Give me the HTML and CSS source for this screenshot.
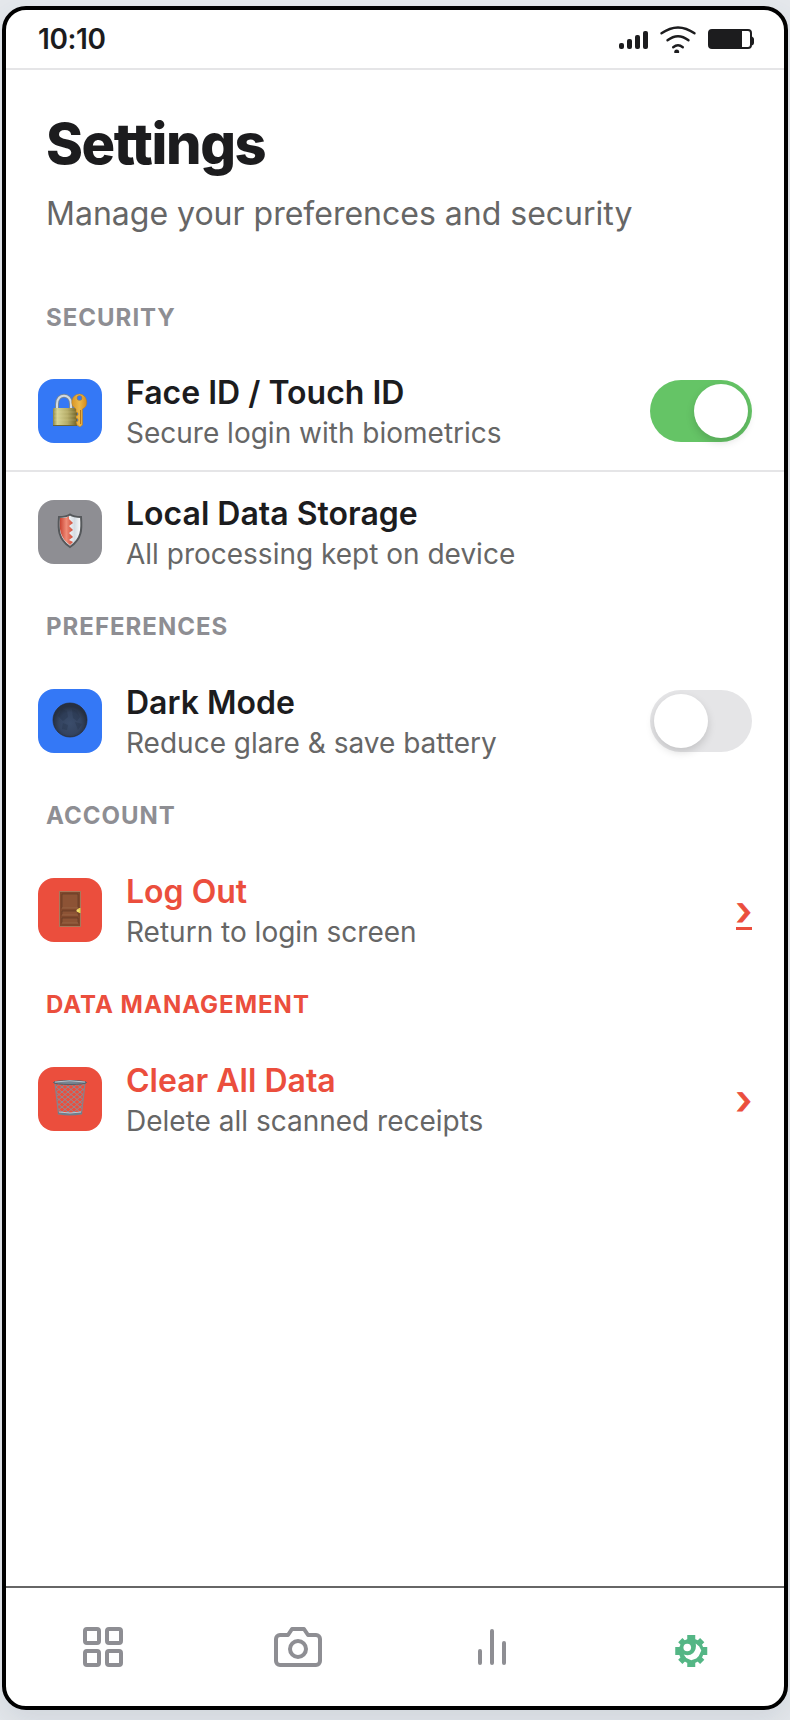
FILE: index.html
```html
<!DOCTYPE html>
<html lang="en">
<head>
<meta charset="utf-8">
<title>Settings</title>
<link rel="stylesheet" href="styles.css">
</head>
<body>
<div class="phone">
  <div class="status">
    <span class="time">10:10</span>
    <svg class="status-icons" width="138" height="36" viewBox="618 20 138 36">
      <g fill="#1c1c1e">
        <rect x="619" y="43" width="5" height="6" rx="2"/>
        <rect x="627" y="39" width="5" height="10" rx="2"/>
        <rect x="635" y="35" width="5" height="14" rx="2"/>
        <rect x="643" y="31" width="5" height="18" rx="2"/>
        <path d="M674.3 53v-1.400a2.400 2.200 0 0 1 4.800 0V53z"/>
        <rect x="709" y="30" width="33" height="18"/>
        <path d="M752 36.500q2 1 2 2.500v4q0 1.500-2 2.500z"/>
      </g>
      <g fill="none" stroke="#1c1c1e" stroke-width="2.400" stroke-linecap="round">
        <path d="M661.500 33.300Q678 21.700 694.500 33.300M667.500 40.300q10.500-8.300 21 0M673.200 47.200q4.800-3.800 9.600 0"/>
        <rect x="709" y="30" width="42" height="18" rx="3" stroke-width="2"/>
      </g>
    </svg>
  </div>
  <main class="content">
    <h1>Settings</h1>
    <p class="lead">Manage your preferences and security</p>

    <h2>SECURITY</h2>
    <div class="row divided">
      <span class="tile blue">
        <svg width="64" height="64">
          <defs>
            <linearGradient id="brass" x2="1"><stop offset="0" stop-color="#8d8545"/><stop offset=".18" stop-color="#d6d393"/><stop offset=".6" stop-color="#b5ac68"/><stop offset="1" stop-color="#716328"/></linearGradient>
            <linearGradient id="gold" x2="1"><stop offset="0" stop-color="#d99525"/><stop offset=".5" stop-color="#edb94a"/><stop offset="1" stop-color="#d58c1b"/></linearGradient>
          </defs>
          <path d="M19 31v-6c0-11 14-11 14 0v6" fill="none" stroke="#778798" stroke-width="4"/>
          <path d="M19 31v-6c0-11 14-11 14 0v6" fill="none" stroke="#d3dbe2" stroke-width="2"/>
          <rect x="15" y="29" width="24" height="18" rx="1" fill="url(#brass)"/>
          <path d="M16 33h22M16 37h22M16 41h22" stroke="#eeeab0" stroke-opacity=".2"/>
          <path d="M15 46.500h24" stroke="#6d6432"/>
          <path fill="url(#gold)" stroke="#b97a1b" stroke-width=".5" fill-rule="evenodd" d="M41.500 15a8 8 0 0 0-3.500 15v3l2 1v2l-2 1v2l2 1v2l-2 1 1 3 3 2 2.500-2V30a8 8 0 0 0-3-15zm0 1.500a2.500 2.500 0 1 1 0 5 2.500 2.500 0 0 1 0-5z"/>
          <path d="M42.500 31v14" stroke="#b6761b"/>
        </svg>
      </span>
      <div class="text"><b>Face ID / Touch ID</b><span>Secure login with biometrics</span></div>
      <span class="toggle on"></span>
    </div>
    <div class="row">
      <span class="tile gray">
        <svg width="64" height="64">
          <defs>
            <linearGradient id="red" x2="1"><stop offset="0" stop-color="#c8402f"/><stop offset=".5" stop-color="#ef8c78"/><stop offset="1" stop-color="#cf4b38"/></linearGradient>
            <linearGradient id="silver" x2="1"><stop offset=".4" stop-color="#f6f8fa"/><stop offset=".7" stop-color="#d5dce3"/><stop offset="1" stop-color="#fff"/></linearGradient>
          </defs>
          <path d="M32 14.500c3 2 7 2.500 11 2.500 1 12 1 22-11 30-12-8-12-18-11-30 4 0 8-.500 11-2.500z" fill="url(#silver)"/>
          <path d="M31 16v3l4 4-4 3 4 4-4 3 4 4-4 3 4 2-3 3c-10-7-11-16-10-27 4 0 6 0 9-2z" fill="url(#red)"/>
          <path d="M32 14.500c3 2 7 2.500 11 2.500 1 12 1 22-11 30-12-8-12-18-11-30 4 0 8-.500 11-2.500z" fill="none" stroke="#55585b" stroke-width="2"/>
        </svg>
      </span>
      <div class="text"><b>Local Data Storage</b><span>All processing kept on device</span></div>
    </div>

    <h2>PREFERENCES</h2>
    <div class="row">
      <span class="tile blue">
        <svg width="64" height="64">
          <defs><radialGradient id="moon" cx=".5" cy=".6"><stop offset="0" stop-color="#3b4d6b"/><stop offset=".65" stop-color="#344460"/><stop offset="1" stop-color="#263042"/></radialGradient></defs>
          <circle cx="32" cy="31" r="17" fill="url(#moon)" stroke="#28292d" stroke-width=".7"/>
          <path d="M20 27l4-7 5 2 1 6-5 4zM34 20l5 2 3 6-3 4-4-3zM25 34l5 2-1 5-5-1zM37 33l7 2-4 6z" fill="#1b263a" opacity=".25"/>
        </svg>
      </span>
      <div class="text"><b>Dark Mode</b><span>Reduce glare &amp; save battery</span></div>
      <span class="toggle"></span>
    </div>

    <h2>ACCOUNT</h2>
    <div class="row">
      <span class="tile red">
        <svg width="64" height="64">
          <rect x="21.500" y="13.500" width="21" height="35" fill="#80482c" stroke="#a8785b"/>
          <path d="M24 16h16v14H24zM24 33h16v4H24zM24 40h16v5H24z" fill="#8d5335" stroke="#51301f" stroke-opacity=".5"/>
          <path d="M24 30h16M24 37h16M24 45h16" stroke="#a86d4a"/>
          <path d="M39.500 32h1v-2h2v5h-2v-1h-1z" fill="#eacb4b"/><circle cx="40" cy="32.500" r="1.500" fill="#f3e16c"/>
        </svg>
      </span>
      <div class="text"><b class="danger">Log Out</b><span>Return to login screen</span></div>
      <a class="chevron linked">›</a>
    </div>

    <h2 class="danger">DATA MANAGEMENT</h2>
    <div class="row">
      <span class="tile red">
        <svg width="64" height="64">
          <defs><pattern id="mesh" width="6" height="5" patternUnits="userSpaceOnUse"><path d="M0 0l6 5M6 0L0 5" stroke="#8e8b94" stroke-width="1"/></pattern></defs>
          <path d="M17 16h30l-3.500 31h-23z" fill="url(#mesh)" stroke="#85838c" stroke-width="1.200"/>
          <path d="M20 45q12 2.500 24 0v2q-12 3-24 0z" fill="#6e7e8c"/><path d="M21 45q11 2 22 0" stroke="#bac9d3" fill="none"/>
          <ellipse cx="32" cy="15.500" rx="16.500" ry="2" fill="#77848f" stroke="#555e68"/>
          <path d="M17 15q15-2.500 30 0" stroke="#b7c4ce" fill="none"/>
        </svg>
      </span>
      <div class="text"><b class="danger">Clear All Data</b><span>Delete all scanned receipts</span></div>
      <a class="chevron">›</a>
    </div>
  </main>
  <nav class="tabs">
    <span><svg width="48" height="48" viewBox="0 0 24 24"><rect x="3" y="3" width="7" height="7" rx="1"/><rect x="14" y="3" width="7" height="7" rx="1"/><rect x="3" y="14" width="7" height="7" rx="1"/><rect x="14" y="14" width="7" height="7" rx="1"/></svg></span>
    <span><svg width="48" height="48" viewBox="0 0 24 24"><path d="M23 19a2 2 0 0 1-2 2H3a2 2 0 0 1-2-2V8a2 2 0 0 1 2-2h4l2-3h6l2 3h4a2 2 0 0 1 2 2z"/><circle cx="12" cy="13" r="4"/></svg></span>
    <span><svg width="48" height="48" viewBox="0 0 24 24"><path d="M6 20v-6M12 20V4M18 20V10"/></svg></span>
    <span><svg class="gear" width="48" height="48" viewBox="0 0 48 48">
      <g transform="translate(28.250 28)">
        <path d="M-4-16h8v6h-8zM-4 10h8v6h-8zM-16-4h6v8h-6zM10-4h6v8h-6z"/>
        <path d="M-3-15.500h6v6h-6zM-3 9.500h6v6h-6zM-15.500-3h6v6h-6zM9.500-3h6v6h-6z" transform="rotate(45)"/>
        <circle r="12.500"/>
        <circle class="hole" cx="-4" cy="-3.500" r="3.800"/>
        <path class="hole" d="M4.500-7.500 8-4.500 10-.5 7.500 5 5 7.500 0 9.300-5 7-7.500 3.500Q-2 5.500 2 2 5.500-2 4.500-7.500z"/>
      </g>
    </svg></span>
  </nav>
</div>
</body>
</html>
```
FILE: styles.css
```css
* { box-sizing: border-box; }
body {
  margin: 0;
  padding: 6px 2px 10px;
  height: 1720px;
  background: #e5e8ec;
  font-family: Inter, "Liberation Sans", sans-serif;
  color: #1c1c1e;
  overflow: hidden;
}
.phone {
  height: 1704px;
  border: 4px solid #000;
  border-radius: 24px;
  background: #fff;
  overflow: hidden;
  display: flex;
  flex-direction: column;
  box-shadow: 0 12px 30px rgba(60, 80, 105, .12);
}
.status {
  height: 60px;
  flex: none;
  padding: 0 28px 2px 32px;
  border-bottom: 2px solid #e5e5e7;
  display: flex;
  align-items: center;
  justify-content: space-between;
}
.time { font-size: 28px; font-weight: 600; line-height: 34px; letter-spacing: -.4px; padding-top: 2px; }
.status-icons { display: block; }
.content { flex: 1; }
h1 {
  margin: 0;
  padding: 40px 40px 0;
  font-size: 56px;
  font-weight: 800;
  line-height: 68px;
  letter-spacing: -1.4px;
}
.lead {
  margin: 0;
  padding: 16px 40px 0;
  font-size: 32px;
  line-height: 40px;
  color: #666;
  height: 68px;
}
h2 {
  margin: 0;
  padding: 19px 40px 0;
  height: 69px;
  font-size: 24px;
  line-height: 32px;
  font-weight: 700;
  letter-spacing: 1px;
  color: #8e8e93;
}
.lead + h2 { height: 105px; padding-top: 56px; }
.row {
  height: 120px;
  padding: 0 32px;
  display: flex;
  align-items: center;
  gap: 24px;
}
.divided { height: 121px; border-bottom: 2px solid #e5e5e7; padding-top: 1px; }
.tile { width: 64px; height: 64px; border-radius: 16px; flex: none; }
.tile svg { display: block; }
.blue { background: #3478f6; }
.gray { background: #8e8e93; }
.red { background: #eb4e3d; }
.text { flex: 1; display: flex; flex-direction: column; gap: 3px; padding-top: 3px; }
.text b { font-size: 32px; line-height: 38px; font-weight: 600; }
.text span { font-size: 28px; line-height: 36px; color: #666; }
.content .danger { color: #eb4e3d; }
.toggle {
  width: 102px;
  height: 62px;
  padding: 4px;
  border-radius: 31px;
  background: #e5e5e7;
  display: flex;
}
.toggle::before {
  content: "";
  width: 54px;
  height: 54px;
  border-radius: 50%;
  background: #fff;
  box-shadow: 0 4px 8px rgba(0, 0, 0, .15);
}
.on { background: #65c466; justify-content: flex-end; }
.chevron { font-size: 40px; line-height: 48px; font-weight: 500; color: #eb4e3d; padding-top: 1px; -webkit-text-stroke: .8px; }
.linked { text-decoration: underline; text-decoration-thickness: 3px; }
.tabs {
  height: 120px;
  flex: none;
  border-top: 2px solid #666;
  display: grid;
  grid-template-columns: repeat(4, 1fr);
  justify-items: center;
  padding-top: 35px;
}
.tabs svg { display: block; fill: none; stroke: #8e8e93; stroke-width: 2; stroke-linecap: round; stroke-linejoin: round; }
.tabs .gear { fill: #54b685; stroke: none; }
.gear .hole { fill: #fff; }
```
